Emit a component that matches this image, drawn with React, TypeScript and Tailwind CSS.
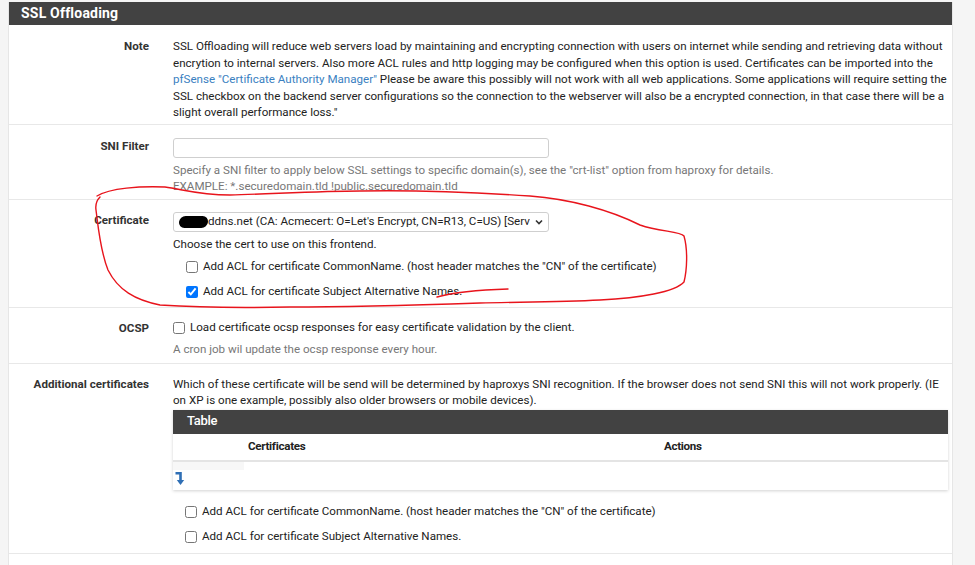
import React from 'react';

const font = { fontFamily: 'Roboto, "Liberation Sans", sans-serif' };

const Row: React.FC<{ label: string; className?: string; children: React.ReactNode }> = ({ label, className = '', children }) => (
  <div className={`grid grid-cols-[164px_1fr] border-b border-[#e8e8e8] ${className}`}>
    <div className="pr-[24px] text-right font-bold text-[11.6px] leading-[16px] text-[#333]">{label}</div>
    <div className="pr-[6px] text-[11.6px] leading-[16.5px] text-[#222]">{children}</div>
  </div>
);

const Check: React.FC<{ checked?: boolean; label: string; className?: string }> = ({ checked, label, className = '' }) => (
  <label className={`flex items-center gap-[5px] h-[16px] ${className}`}>
    <input type="checkbox" defaultChecked={checked} className="w-[12px] h-[12px] m-0 accent-[#0075ff]" />
    <span className="whitespace-nowrap">{label}</span>
  </label>
);

const LevelDown = () => (
  <svg width="11" height="15" viewBox="0 0 11 15" fill="none">
    <path d="M0.5 2.2h5v8" stroke="#2f6fb5" strokeWidth="2.6" />
    <path d="M1.8 9h7.4L5.5 14z" fill="#2f6fb5" />
  </svg>
);

export default function App() {
  return (
    <div className="relative min-h-screen bg-[#f5f5f5] pl-[8px] pr-[22px] pt-[2px]" style={font}>
      <div className="bg-white border-l border-r border-[#e6e6e6] min-h-[563px]">
        <div className="h-[23px] bg-[#424242] pl-[12px] flex items-center text-white font-bold text-[14px] tracking-[0.2px]">
          SSL Offloading
        </div>

        <Row label="Note" className="pt-[13px] pb-[3px]">
          <p className="whitespace-nowrap">
            SSL Offloading will reduce web servers load by maintaining and encrypting connection with users on internet while sending and retrieving data without
            <br />
            encrytion to internal servers. Also more ACL rules and http logging may be configured when this option is used. Certificates can be imported into the
            <br />
            <span className="text-[#3a7fc1]">pfSense "Certificate Authority Manager"</span> Please be aware this possibly will not work with all web applications. Some applications will require setting the
            <br />
            SSL checkbox on the backend server configurations so the connection to the webserver will also be a encrypted connection, in that case there will be a
            <br />
            slight overall performance loss."
          </p>
        </Row>

        <Row label="SNI Filter" className="pt-[13px] pb-[5px]">
          <div className="w-[376px] h-[20px] border border-[#cfcfcf] rounded-[3px] bg-white" />
          <div className="mt-[4px] text-[#777] leading-[16px]">
            Specify a SNI filter to apply below SSL settings to specific domain(s), see the "crt-list" option from haproxy for details.
            <br />
            EXAMPLE: *.securedomain.tld !public.securedomain.tld
          </div>
        </Row>

        <Row label="Certificate" className="pt-[12px] pb-[7px]">
          <div className="w-[376px] h-[20px] border border-[#cfcfcf] rounded-[3px] bg-white flex items-center pl-[5px] pr-[4px] text-[#222] overflow-hidden">
            <span className="inline-block w-[29px] h-[12px] bg-black rounded-[6px] -skew-x-6 shrink-0" />
            <span className="whitespace-nowrap flex-1 overflow-hidden">ddns.net (CA: Acmecert: O=Let's Encrypt, CN=R13, C=US) [Serv</span>
            <svg width="10" height="10" viewBox="0 0 10 10" className="shrink-0 ml-[4px]">
              <path d="M2 3.5l3 3 3-3" stroke="#333" strokeWidth="1.6" fill="none" />
            </svg>
          </div>
          <div className="mt-[4px] leading-[16px]">Choose the cert to use on this frontend.</div>
          <div className="pl-[13px] mt-[7px] flex flex-col gap-[9px]">
            <Check label='Add ACL for certificate CommonName. (host header matches the "CN" of the certificate)' />
            <Check checked label="Add ACL for certificate Subject Alternative Names." />
          </div>
        </Row>

        <Row label="OCSP" className="pt-[12px] pb-[6px]">
          <Check label="Load certificate ocsp responses for easy certificate validation by the client." className="gap-[4px]" />
          <div className="mt-[5px] text-[#777] leading-[16px]">A cron job wil update the ocsp response every hour.</div>
        </Row>

        <Row label="Additional certificates" className="pt-[12px] pb-[8px]">
          <p className="leading-[16px] whitespace-nowrap">
            Which of these certificate will be send will be determined by haproxys SNI recognition. If the browser does not send SNI this will not work properly. (IE
            <br />
            on XP is one example, possibly also older browsers or mobile devices).
          </p>
          <div className="mt-[2px] mr-[-2px] shadow-[0_1px_3px_rgba(0,0,0,0.18)] bg-white">
            <div className="h-[24px] bg-[#424242] pl-[14px] flex items-center text-white text-[13px] font-medium tracking-[-0.3px]">Table</div>
            <div className="h-[28px] flex items-center border-b-2 border-[#e4e4e4] font-bold text-[#222] tracking-[-0.3px]">
              <span className="w-[491px] pl-[75px]">Certificates</span>
              <span>Actions</span>
            </div>
            <div className="h-[28px] relative">
              <div className="w-[71px] h-[8px] bg-[#f7f7f7]" />
              <div className="pl-[2px] pt-[1px]">
                <LevelDown />
              </div>
            </div>
          </div>
          <div className="pl-[12px] mt-[14px] flex flex-col gap-[9px]">
            <Check label='Add ACL for certificate CommonName. (host header matches the "CN" of the certificate)' />
            <Check label="Add ACL for certificate Subject Alternative Names." />
          </div>
        </Row>
      </div>

      <svg className="absolute inset-0 pointer-events-none" width="975" height="565" viewBox="0 0 975 565" fill="none">
        <path
          d="M97 196 C110 188 140 186 165 187 C185 190 200 195 230 195 C270 194 320 191 360 191 C410 190 470 192 530 196 C570 199 610 210 640 225 C660 232 680 231 684 236 C688 250 687 270 684 282 C675 292 640 298 600 300 C560 302 520 302 480 303 C420 305 350 307 290 307 C240 308 190 307 160 305 C135 300 118 290 108 270 C100 250 98 225 96 210 C95 203 98 199 100 197"
          stroke="#e8141c"
          strokeWidth="1.4"
          strokeLinecap="round"
        />
        <path d="M437 297 C455 292 475 290 508 289" stroke="#e8141c" strokeWidth="1.4" strokeLinecap="round" />
      </svg>
    </div>
  );
}
